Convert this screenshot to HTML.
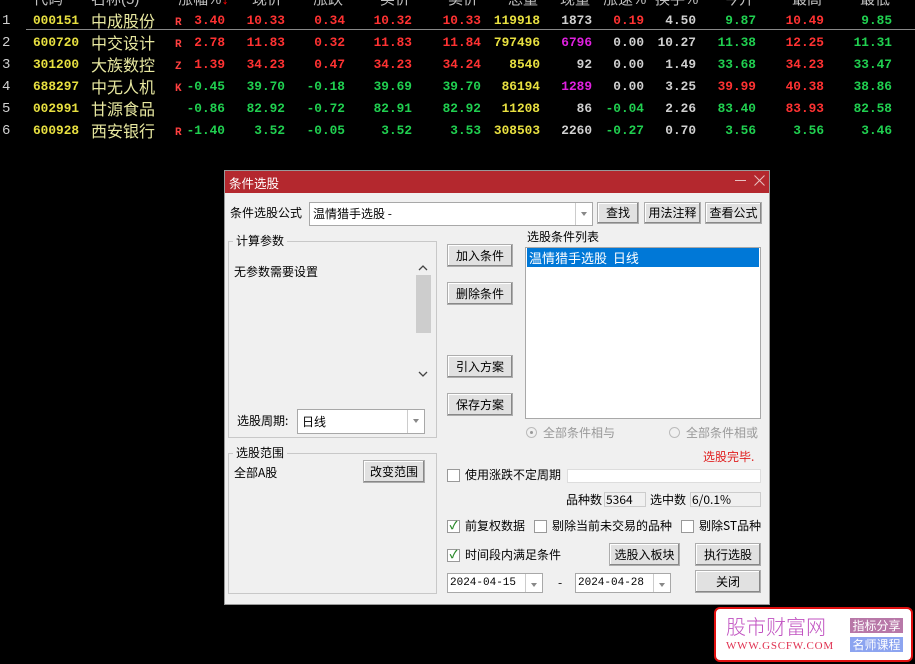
<!DOCTYPE html>
<html><head><meta charset="utf-8"><style>
*{margin:0;padding:0;box-sizing:border-box}
body{width:915px;height:664px;background:#000;position:relative;overflow:hidden;font-family:"Liberation Sans","Noto Sans CJK SC",sans-serif}
.a{position:absolute;white-space:nowrap}
.h{color:#c0c0c0;font-size:15px;top:-9px;line-height:18px}
.n{font-family:"Liberation Mono",monospace;font-weight:bold;font-size:12.8px;line-height:22px;text-align:right}
.r{color:#ff3232}.g{color:#20d050}.y{color:#e8e040}.w{color:#d0d0d0}.m{color:#e020e0}
.nm{color:#e8e8a0;font-size:16px;line-height:22px;font-family:"Noto Sans CJK SC",sans-serif}
.d{font-size:12px;color:#000;line-height:16px;font-family:"Noto Sans CJK SC",sans-serif}
.btn{position:absolute;background:#e1e1e1;border:1px solid #adadad;box-shadow:inset -1px -1px 0 #888,inset 1px 1px 0 #fff;font-size:12px;text-align:center;font-family:"Noto Sans CJK SC",sans-serif;color:#000}
.box{position:absolute;background:#fff;border:1px solid #a8a8a8}
.grp{position:absolute;border:1px solid #c8c8c8}
.cb{position:absolute;width:13px;height:13px;border:1px solid #999;background:#fff;font-size:11px;line-height:11px;color:#2a8a2a;text-align:center;font-weight:bold}
.dd{position:absolute;border-left:1px solid #ccc;top:0;bottom:0;width:17px;right:0}
.dd:after{content:"";position:absolute;left:5px;top:9px;border:3px solid transparent;border-top:4px solid #888}
</style></head><body>
<div class="a h" style="left:33px">代码</div>
<div class="a h" style="left:91px">名称(5)</div>
<div class="a h" style="left:178px">涨幅%<span style="color:#f00">↓</span></div>
<div class="a h" style="left:252px">现价</div>
<div class="a h" style="left:313px">涨跌</div>
<div class="a h" style="left:380px">买价</div>
<div class="a h" style="left:448px">卖价</div>
<div class="a h" style="left:508px">总量</div>
<div class="a h" style="left:560px">现量</div>
<div class="a h" style="left:603px">涨速%</div>
<div class="a h" style="left:655px">换手%</div>
<div class="a h" style="left:724px">今开</div>
<div class="a h" style="left:792px">最高</div>
<div class="a h" style="left:860px">最低</div>
<div class="a" style="left:26px;top:29px;width:889px;height:1px;background:#888"></div>

<div style="position:absolute;left:0;top:10px;width:915px;height:140px">
<div class="a w n" style="left:2px;top:0;text-align:left;font-weight:normal;font-size:14px">1<br>2<br>3<br>4<br>5<br>6</div>
<div class="a y n" style="left:33px;top:0;text-align:left">000151<br>600720<br>301200<br>688297<br>002991<br>600928</div>
<div class="a nm" style="left:91px;top:-1px">中成股份<br>中交设计<br>大族数控<br>中无人机<br>甘源食品<br>西安银行</div>
<div class="a n" style="left:175px;top:2px;color:#ff4040;font-size:11px;text-align:left">R<br>R<br>Z<br>K<br>&nbsp;<br>R</div>
<div class="a n" style="right:690px;top:0"><span class="r">3.40<br>2.78<br>1.39</span><br><span class="g">-0.45<br>-0.86<br>-1.40</span></div>
<div class="a n" style="right:630px;top:0"><span class="r">10.33<br>11.83<br>34.23</span><br><span class="g">39.70<br>82.92<br>3.52</span></div>
<div class="a n" style="right:570px;top:0"><span class="r">0.34<br>0.32<br>0.47</span><br><span class="g">-0.18<br>-0.72<br>-0.05</span></div>
<div class="a n" style="right:503px;top:0"><span class="r">10.32<br>11.83<br>34.23</span><br><span class="g">39.69<br>82.91<br>3.52</span></div>
<div class="a n" style="right:434px;top:0"><span class="r">10.33<br>11.84<br>34.24</span><br><span class="g">39.70<br>82.92<br>3.53</span></div>
<div class="a n y" style="right:375px;top:0">119918<br>797496<br>8540<br>86194<br>11208<br>308503</div>
<div class="a n w" style="right:323px;top:0">1873<br><span class="m">6796</span><br>92<br><span class="m">1289</span><br>86<br>2260</div>
<div class="a n" style="right:271px;top:0"><span class="r">0.19</span><br><span class="w">0.00<br>0.00<br>0.00</span><br><span class="g">-0.04<br>-0.27</span></div>
<div class="a n w" style="right:219px;top:0">4.50<br>10.27<br>1.49<br>3.25<br>2.26<br>0.70</div>
<div class="a n" style="right:159px;top:0"><span class="g">9.87<br>11.38<br>33.68</span><br><span class="r">39.99</span><br><span class="g">83.40<br>3.56</span></div>
<div class="a n" style="right:91px;top:0"><span class="r">10.49<br>12.25<br>34.23<br>40.38<br>83.93</span><br><span class="g">3.56</span></div>
<div class="a n g" style="right:23px;top:0">9.85<br>11.31<br>33.47<br>38.86<br>82.58<br>3.46</div>
</div>

<div class="a" style="left:224px;top:170px;width:546px;height:435px;background:#f0f0f0;border:1px solid #999">
<div class="a" style="left:0;top:0;width:544px;height:22px;background:#b4282e"></div>
</div>
<div class="a" style="left:229px;top:173px;color:#fff;font-size:12.5px;font-family:'Noto Sans CJK SC',sans-serif">条件选股</div>
<div class="a" style="left:735px;top:180px;width:11px;height:1px;background:#e8c0c0"></div>
<svg class="a" style="left:754px;top:175px" width="11" height="11"><path d="M0.5 0.5L10.5 10.5M10.5 0.5L0.5 10.5" stroke="#e8c0c0" stroke-width="1"/></svg>

<div class="a d" style="left:230px;top:205px">条件选股公式</div>
<div class="box" style="left:309px;top:202px;width:284px;height:24px"><span class="a d" style="left:3px;top:3px">温情猎手选股 -</span><div class="dd"></div></div>
<div class="btn" style="left:597px;top:202px;width:42px;height:22px;line-height:20px">查找</div>
<div class="btn" style="left:644px;top:202px;width:57px;height:22px;line-height:20px">用法注释</div>
<div class="btn" style="left:705px;top:202px;width:57px;height:22px;line-height:20px">查看公式</div>

<div class="grp" style="left:228px;top:241px;width:209px;height:197px"></div>
<div class="a d" style="left:233px;top:233px;background:#f0f0f0;padding:0 3px">计算参数</div>
<div class="a d" style="left:234px;top:264px">无参数需要设置</div>
<div class="a" style="left:416px;top:260px;width:16px;height:122px;background:#f0f0f0"></div>
<svg class="a" style="left:418px;top:264px" width="10" height="8"><path d="M1 6L5 2L9 6" fill="none" stroke="#444" stroke-width="1.3"/></svg>
<div class="a" style="left:416px;top:275px;width:15px;height:58px;background:#cdcdcd"></div>
<svg class="a" style="left:418px;top:370px" width="10" height="8"><path d="M1 2L5 6L9 2" fill="none" stroke="#444" stroke-width="1.3"/></svg>
<div class="a d" style="left:237px;top:413px">选股周期:</div>
<div class="box" style="left:297px;top:409px;width:128px;height:25px"><span class="a d" style="left:4px;top:4px">日线</span><div class="dd"></div></div>

<div class="btn" style="left:447px;top:244px;width:66px;height:23px;line-height:21px">加入条件</div>
<div class="btn" style="left:447px;top:282px;width:66px;height:23px;line-height:21px">删除条件</div>
<div class="btn" style="left:447px;top:355px;width:66px;height:23px;line-height:21px">引入方案</div>
<div class="btn" style="left:447px;top:393px;width:66px;height:23px;line-height:21px">保存方案</div>

<div class="a d" style="left:527px;top:229px">选股条件列表</div>
<div class="box" style="left:525px;top:247px;width:236px;height:172px"></div>
<div class="a" style="left:527px;top:248px;width:232px;height:19px;background:#0078d7;color:#fff;font-size:13px;line-height:19px;padding-left:2px;font-family:'Noto Sans CJK SC',sans-serif">温情猎手选股&nbsp; 日线</div>

<div class="a" style="left:526px;top:427px;width:11px;height:11px;border:1px solid #bbb;border-radius:50%;background:#f0f0f0"><div style="margin:3px;width:3px;height:3px;background:#999;border-radius:50%"></div></div>
<div class="a d" style="left:543px;top:425px;color:#999">全部条件相与</div>
<div class="a" style="left:669px;top:427px;width:11px;height:11px;border:1px solid #bbb;border-radius:50%"></div>
<div class="a d" style="left:686px;top:425px;color:#999">全部条件相或</div>
<div class="a d" style="left:703px;top:449px;color:#e02020">选股完毕.</div>

<div class="grp" style="left:228px;top:453px;width:209px;height:141px"></div>
<div class="a d" style="left:233px;top:445px;background:#f0f0f0;padding:0 3px">选股范围</div>
<div class="a d" style="left:234px;top:465px">全部A股</div>
<div class="btn" style="left:363px;top:460px;width:62px;height:23px;line-height:21px">改变范围</div>

<div class="cb" style="left:447px;top:469px"></div>
<div class="a d" style="left:465px;top:467px">使用涨跌不定周期</div>
<div class="box" style="left:567px;top:469px;width:194px;height:14px;border-color:#ddd"></div>
<div class="a d" style="left:566px;top:492px">品种数</div>
<div class="box" style="left:604px;top:492px;width:42px;height:15px;background:#f0f0f0;border-color:#ccc"><span class="a d" style="left:1px;top:-1px">5364</span></div>
<div class="a d" style="left:650px;top:492px">选中数</div>
<div class="box" style="left:690px;top:492px;width:71px;height:15px;background:#f0f0f0;border-color:#ccc"><span class="a d" style="left:1px;top:-1px">6/0.1%</span></div>

<div class="cb" style="left:447px;top:520px">✓</div>
<div class="a d" style="left:465px;top:518px">前复权数据</div>
<div class="cb" style="left:534px;top:520px"></div>
<div class="a d" style="left:552px;top:518px">剔除当前未交易的品种</div>
<div class="cb" style="left:681px;top:520px"></div>
<div class="a d" style="left:699px;top:518px">剔除ST品种</div>

<div class="cb" style="left:447px;top:549px">✓</div>
<div class="a d" style="left:465px;top:547px">时间段内满足条件</div>
<div class="btn" style="left:609px;top:543px;width:71px;height:23px;line-height:21px">选股入板块</div>
<div class="btn" style="left:695px;top:543px;width:66px;height:23px;line-height:21px">执行选股</div>
<div class="btn" style="left:695px;top:570px;width:66px;height:23px;line-height:21px">关闭</div>
<div class="box" style="left:447px;top:573px;width:96px;height:20px"><span class="a" style="left:2px;top:3px;font-family:'Liberation Mono',monospace;font-size:11px">2024-04-15</span><div class="dd"></div></div>
<div class="a d" style="left:558px;top:575px">-</div>
<div class="box" style="left:575px;top:573px;width:96px;height:20px"><span class="a" style="left:2px;top:3px;font-family:'Liberation Mono',monospace;font-size:11px">2024-04-28</span><div class="dd"></div></div>

<div class="a" style="left:714px;top:607px;width:199px;height:55px;background:#fff;border:2px solid #e01010;border-radius:6px"></div>
<div class="a" style="left:726px;top:613px;font-size:20px;line-height:26px;color:#c050c0;font-family:'Noto Sans CJK SC',sans-serif;font-weight:300">股市财富网</div>
<div class="a" style="left:726px;top:640px;font-size:11px;color:#e03050;font-family:'Liberation Serif',serif;letter-spacing:0.8px">WWW.GSCFW.COM</div>
<div class="a" style="left:850px;top:618px;width:53px;height:15px;background:#b878a8;color:#fff;font-size:12px;line-height:15px;text-align:center;font-family:'Noto Sans CJK SC',sans-serif">指标分享</div>
<div class="a" style="left:850px;top:637px;width:53px;height:15px;background:#8ca4f0;color:#fff;font-size:12px;line-height:15px;text-align:center;font-family:'Noto Sans CJK SC',sans-serif">名师课程</div>
</body></html>
